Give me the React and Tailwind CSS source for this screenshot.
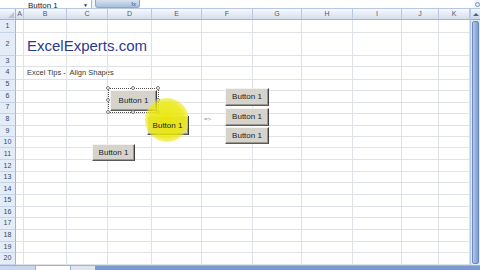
import React from 'react';

const cols = [
  { name: 'A', w: 8 },
  { name: 'B', w: 43 },
  { name: 'C', w: 41 },
  { name: 'D', w: 44 },
  { name: 'E', w: 50 },
  { name: 'F', w: 51 },
  { name: 'G', w: 49 },
  { name: 'H', w: 51 },
  { name: 'I', w: 49 },
  { name: 'J', w: 37 },
  { name: 'K', w: 31 },
];

const rowHeights = [13, 23, 11, 13, 11, 12, 11, 12, 12, 11, 12, 12, 11, 12, 12, 11, 12, 12, 11, 12];

const font = { fontFamily: '"Liberation Sans", Arial, sans-serif' };

const ShapeButton = ({ className = '', children = 'Button 1' }) => (
  <div
    className={`absolute flex items-center justify-center bg-[#d6d3cc] border border-t-[#f4f3ef] border-l-[#f4f3ef] border-r-[#3d3d3d] border-b-[#5a5a5a] shadow-[inset_-1px_-1px_0_#9a9893] text-[8px] text-[#1d1d1d] ${className}`}
  >
    {children}
  </div>
);

const Handle = ({ className }) => (
  <div className={`absolute w-[4px] h-[4px] rounded-full bg-white border border-[#7a7a7a] ${className}`} />
);

export default function App() {
  return (
    <div className="w-[480px] h-[270px] overflow-hidden bg-white flex flex-col select-none" style={font}>
      {/* Name box / formula bar */}
      <div className="h-[9px] flex items-stretch bg-[#f1f5fb] border-b border-[#b6c8e2] overflow-hidden">
        <div className="w-[92px] bg-white border-r border-[#a5b9d6] flex items-end justify-between pl-[28px] pr-[3px]">
          <span className="text-[8px] leading-[8px] text-[#222] -mb-[2px]">Button 1</span>
          <span className="text-[5px] leading-[6px] text-[#333]">▼</span>
        </div>
        <div className="w-[3px]" />
        <div className="w-[45px] rounded-b-[3px] bg-gradient-to-b from-[#d8e3f2] to-[#a9bddb] border border-t-0 border-[#8fa7cb] flex items-end justify-end pr-[3px]">
          <span className="text-[6px] leading-[6px] text-[#45577a]">fx</span>
        </div>
        <div className="flex-1 bg-white" />
        <div className="w-[6px] flex items-center justify-center">
          <div className="w-[5px] h-[5px] rounded-full border border-[#7d93b8] bg-[#e6edf8]" />
        </div>
      </div>

      <div className="flex flex-1 min-h-0">
        {/* Sheet */}
        <div className="relative flex-1 flex flex-col">
          {/* Column headers */}
          <div className="flex h-[11px] bg-gradient-to-b from-[#f7f9fd] to-[#d5deec] border-b border-[#9eb6ce]">
            <div className="w-[16px] border-r border-[#9eb6ce] flex items-end justify-end">
              <div className="w-0 h-0 border-l-[6px] border-l-transparent border-b-[6px] border-b-[#b5c4dc] mr-[1px] mb-[1px]" />
            </div>
            {cols.map((c) => (
              <div
                key={c.name}
                style={{ width: c.w }}
                className="border-r border-[#b8c9e0] flex items-center justify-center text-[7px] text-[#4a5a78]"
              >
                {c.name}
              </div>
            ))}
          </div>

          {/* Rows */}
          {rowHeights.map((h, i) => (
            <div key={i} className="flex" style={{ height: h }}>
              <div className="w-[16px] shrink-0 bg-[#e4ecf7] border-r border-[#9eb6ce] border-b border-b-[#c5d4e8] flex items-center justify-center text-[7px] text-[#32466a]">
                {i + 1}
              </div>
              {cols.map((c, j) => (
                <div
                  key={c.name}
                  style={{ width: c.w }}
                  className="shrink-0 border-r border-b border-[#dfe2e6] flex items-center overflow-visible relative"
                >
                  {i === 1 && j === 1 && (
                    <span className="absolute left-[3px] top-[5px] whitespace-nowrap text-[15px] leading-[16px] text-[#2b3a92]">
                      ExcelExperts.com
                    </span>
                  )}
                  {i === 3 && j === 1 && (
                    <span className="absolute left-[3px] whitespace-pre text-[7.5px] text-[#3a3a3a]">
                      Excel Tips -  Align Shapes
                    </span>
                  )}
                  {i === 7 && j === 4 && (
                    <span className="absolute left-[52px] text-[6px] text-[#8a8a8a]">=&gt;</span>
                  )}
                </div>
              ))}
            </div>
          ))}

          {/* Shapes layer */}
          <div className="absolute inset-0 pointer-events-none">
            {/* selected button */}
            <ShapeButton className="left-[110px] top-[81px] w-[47px] h-[21px]" />
            <div className="absolute left-[108px] top-[79px] w-[51px] h-[25px] border border-dotted border-[#555]" />
            <Handle className="left-[106px] top-[77px]" />
            <Handle className="left-[131px] top-[77px]" />
            <Handle className="left-[156px] top-[77px]" />
            <Handle className="left-[106px] top-[89px]" />
            <Handle className="left-[156px] top-[89px]" />
            <Handle className="left-[106px] top-[101px]" />
            <Handle className="left-[131px] top-[101px]" />
            <Handle className="left-[156px] top-[101px]" />

            {/* button under the cursor highlight */}
            <ShapeButton className="left-[147px] top-[107px] w-[42px] h-[19px]" children="" />
            <div className="absolute left-[145px] top-[89px] w-[44px] h-[44px] rounded-full bg-[radial-gradient(circle,rgba(232,230,0,0.92)_0%,rgba(235,232,10,0.85)_55%,rgba(240,238,60,0.35)_82%,rgba(255,255,255,0)_100%)]" />
            <div className="absolute left-[147px] top-[107px] w-[42px] h-[19px] flex items-center justify-center text-[8px] text-[#1d1d1d] border-r border-[#3d3d3d]">
              Button 1
            </div>

            <ShapeButton className="left-[92px] top-[135px] w-[43px] h-[17px]" />

            <ShapeButton className="left-[225px] top-[79px] w-[44px] h-[18px]" />
            <ShapeButton className="left-[225px] top-[99px] w-[44px] h-[18px]" />
            <ShapeButton className="left-[225px] top-[118px] w-[44px] h-[17px]" />
          </div>
        </div>

        {/* Vertical scrollbar */}
        <div className="w-[10px] flex flex-col bg-[#e3ebf6] border-l border-[#b7c8e1]">
          <div className="h-[11px] bg-gradient-to-b from-[#f1f5fb] to-[#c9d7ec] border-b border-[#93a9cd] flex items-center justify-center">
            <div className="w-0 h-0 border-l-[3px] border-l-transparent border-r-[3px] border-r-transparent border-b-[3px] border-b-[#4a5f86]" />
          </div>
          <div className="flex-1 mx-[1px] my-[1px] rounded-[2px] bg-gradient-to-r from-[#b4c8e8] to-[#7d9bd0] border border-[#6a89c0]" />
        </div>
      </div>

      {/* Sheet tabs */}
      <div className="h-[5px] flex bg-[#c9d8ee] border-t border-[#9db3d6]">
        <div className="w-[35px]" />
        <div className="w-[36px] bg-white border-x border-[#9db3d6]" />
        <div className="w-[24px] bg-[#dfe6f0]" />
        <div className="flex-1 bg-[#7b9bd0]" />
      </div>
    </div>
  );
}
